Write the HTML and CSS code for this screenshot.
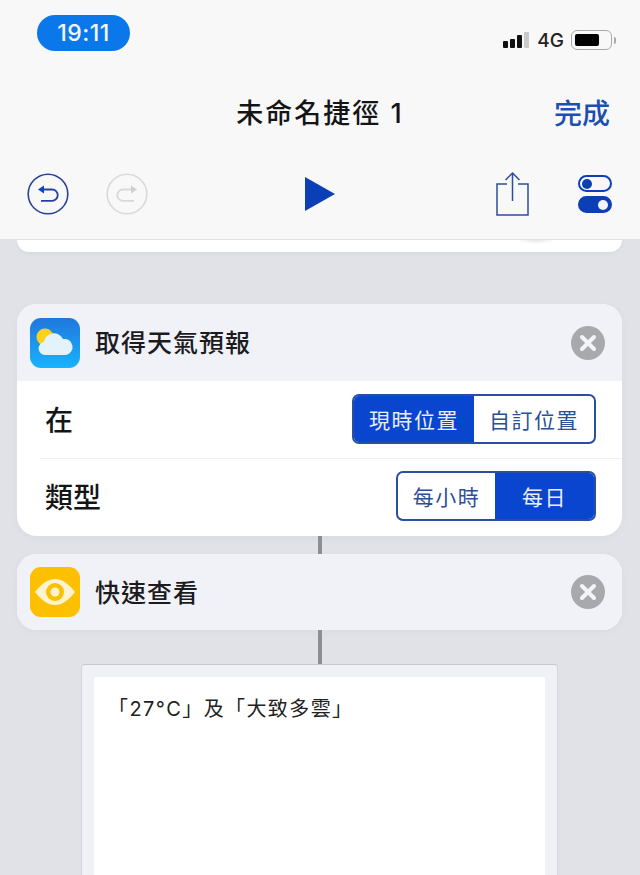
FILE: index.html
```html
<!DOCTYPE html>
<html lang="zh-Hant">
  <head>
    <meta charset="UTF-8" />
    <meta name="viewport" content="width=device-width, initial-scale=1" />
    <title>未命名捷徑 1</title>
    <link rel="stylesheet" href="styles.css">
  </head>
  <body>
    <header>
      <div class="status-bar">
        <span class="time-pill">19:11</span>
        <div class="status-right">
          <div class="signal">
            <i class="bar-1"></i>
            <i class="bar-2"></i>
            <i class="bar-3"></i>
            <i class="bar-4"></i>
          </div>
          <span class="network">4G</span>
          <div class="battery"><div class="battery-level"></div></div>
          <div class="battery-tip"></div>
        </div>
      </div>

      <div class="nav-row">
        <h1 class="title">未命名捷徑 1</h1>
        <a href="#" class="done">完成</a>
      </div>

      <div class="toolbar">
        <div class="toolbar-left">
          <svg class="round-icon" viewBox="0 0 42 42" fill="none" stroke="#27419c" stroke-width="1.6">
            <circle cx="21" cy="21" r="19.8" />
            <path d="M14 16.5H25a5.7 5.7 0 0 1 0 11.4H14" stroke-width="1.8" />
            <path d="M11 16.5l6-4v8z" fill="#0a45c4" stroke="none" />
          </svg>
          <svg class="round-icon" viewBox="0 0 42 42" fill="none" stroke="#d9d9db" stroke-width="1.6">
            <circle cx="21" cy="21" r="19.8" />
            <path d="M28 16.5H17a5.7 5.7 0 0 0 0 11.4H28" stroke-width="1.8" />
            <path d="M31 16.5l-6-4v8z" fill="#cfcfd2" stroke="none" />
          </svg>
        </div>
        <svg class="play" viewBox="0 0 30 34"><path d="M0 0L30 17L0 34z" fill="#0a3fb5" /></svg>
        <div class="toolbar-right">
          <svg class="share" viewBox="0 0 34 46" fill="none" stroke="#2b4d9d" stroke-width="1.5">
            <path d="M11 13H1v31h31V13H22" />
            <path d="M16.5 30V2M9.5 9l7-7 7 7" />
          </svg>
          <div class="toggles">
            <div class="toggle toggle-off"><span></span></div>
            <div class="toggle toggle-on"><span></span></div>
          </div>
        </div>
      </div>
    </header>

    <main>
      <div class="prev-card"></div>

      <section class="card">
        <div class="card-head">
          <svg class="app-icon" viewBox="0 0 50 50">
            <defs>
              <linearGradient id="sky" x1="0" y1="0" x2="0" y2="1">
                <stop offset="0" stop-color="#2077dd" />
                <stop offset="1" stop-color="#19b3fc" />
              </linearGradient>
            </defs>
            <rect width="50" height="50" rx="11" fill="url(#sky)" />
            <circle cx="15" cy="19" r="8.5" fill="#fcd021" />
            <path d="M15 37a6.500 6.500 0 0 1-1-12.900a10 10 0 0 1 19-3a8 8 0 0 1 3 15.900z" fill="#e4f3fb" />
          </svg>
          <span class="card-title">取得天氣預報</span>
          <span class="close-btn">
            <svg viewBox="0 0 34 34"><path d="M11 11L23 23M23 11L11 23" stroke="#f4f4f6" stroke-width="4" stroke-linecap="round" /></svg>
          </span>
        </div>
        <div class="param-row">
          <span class="param-label">在</span>
          <div class="segmented">
            <span class="seg seg-active seg-wide">現時位置</span>
            <span class="seg seg-wide">自訂位置</span>
          </div>
        </div>
        <div class="param-row">
          <span class="param-label">類型</span>
          <div class="segmented">
            <span class="seg seg-hourly">每小時</span>
            <span class="seg seg-active seg-daily">每日</span>
          </div>
        </div>
      </section>

      <div class="connector connector-short"></div>

      <section class="card">
        <div class="card-head card-head-only">
          <svg class="app-icon" viewBox="0 0 50 50">
            <rect width="50" height="50" rx="11" fill="#fcc000" />
            <path d="M5 25C13 15 19 12 25 12s12 3 20 13c-8 10-14 13-20 13S13 35 5 25z" fill="#fdf3cf" />
            <circle cx="25" cy="25" r="9" fill="#fcc000" />
            <circle cx="25" cy="25" r="4.500" fill="#fdf3cf" />
          </svg>
          <span class="card-title">快速查看</span>
          <span class="close-btn">
            <svg viewBox="0 0 34 34"><path d="M11 11L23 23M23 11L11 23" stroke="#f4f4f6" stroke-width="4" stroke-linecap="round" /></svg>
          </span>
        </div>
      </section>

      <div class="connector connector-long"></div>

      <div class="preview">
        <div class="preview-inner">「27°C」及「大致多雲」</div>
      </div>
    </main>
  </body>
</html>
```

FILE: styles.css
```css
* {
  margin: 0;
  padding: 0;
  box-sizing: border-box;
  font-family: "Inter", "Noto Sans CJK TC", sans-serif;
}
html,
body {
  height: 875px;
  overflow: hidden;
}
body {
  background: #e1e2e8;
  color: #111;
}
a {
  color: inherit;
  text-decoration: none;
}

/* Header */
header {
  position: relative;
  z-index: 2;
  height: 240px;
  background: #f8f8f9;
  border-bottom: 1px solid #e3e3e6;
  padding-top: 15px;
}
.status-bar {
  display: flex;
  justify-content: space-between;
  align-items: center;
  height: 36px;
  padding: 0 24px 0 37px;
}
.time-pill {
  width: 93px;
  height: 36px;
  border-radius: 18px;
  background: #0a78ea;
  color: #f2f6fc;
  font-size: 23px;
  font-weight: 500;
  letter-spacing: 0.5px;
  line-height: 36px;
  text-align: center;
}
.status-right {
  display: flex;
  align-items: center;
  margin-top: 14px;
}
.signal {
  display: flex;
  align-items: flex-end;
  gap: 2px;
  height: 16px;
  margin-right: 8px;
}
.signal i {
  display: block;
  width: 5px;
  background: #111;
  border-radius: 1px;
}
.signal .bar-1 {
  height: 7px;
}
.signal .bar-2 {
  height: 9px;
}
.signal .bar-3 {
  height: 13px;
}
.signal .bar-4 {
  height: 16px;
  background: #c9c9cb;
}
.network {
  font-size: 19px;
  font-weight: 500;
  color: #222;
  margin-right: 7px;
}
.battery {
  width: 41px;
  height: 20px;
  padding: 3px;
  border: 1.5px solid #a9a9ab;
  border-radius: 6px;
}
.battery-level {
  width: 24px;
  height: 100%;
  background: #000;
  border-radius: 2px;
}
.battery-tip {
  width: 2px;
  height: 7px;
  margin-left: 2px;
  background: #a9a9ab;
  border-radius: 0 2px 2px 0;
}

.nav-row {
  position: relative;
  display: flex;
  justify-content: center;
  align-items: center;
  height: 46px;
  margin-top: 39px;
}
.title {
  margin-bottom: 4px;
  font-size: 27px;
  font-weight: 500;
  letter-spacing: 2px;
  color: #151515;
}
.done {
  position: absolute;
  right: 30px;
  top: 1px;
  font-size: 28px;
  font-weight: 500;
  line-height: 46px;
  color: #1c4fb0;
}

/* Toolbar */
.toolbar {
  position: relative;
  display: flex;
  justify-content: center;
  align-items: center;
  height: 50px;
  margin-top: 33px;
}
.toolbar-left {
  position: absolute;
  left: 27px;
  display: flex;
  gap: 37px;
}
.round-icon {
  display: block;
  width: 42px;
  height: 42px;
}
.play {
  display: block;
  width: 30px;
  height: 34px;
}
.toolbar-right {
  position: absolute;
  right: 28px;
  display: flex;
  align-items: center;
  gap: 48px;
}
.share {
  display: block;
  width: 34px;
  height: 46px;
  margin-top: -1px;
}
.toggles {
  display: flex;
  flex-direction: column;
  gap: 4px;
  margin-top: 0;
}
.toggle {
  display: flex;
  align-items: center;
  width: 34px;
  height: 17px;
  padding: 1.5px 2px;
  border-radius: 9px;
  border: 2px solid #0a3fb5;
}
.toggle span {
  width: 10px;
  height: 10px;
  border-radius: 50%;
  background: #0a3fb5;
}
.toggle-on {
  justify-content: flex-end;
  background: #0a3fb5;
}
.toggle-on span {
  background: #f2f4fa;
}

/* Cards */
main {
  display: flex;
  flex-direction: column;
  padding: 0 18px 0 17px;
}
.prev-card {
  height: 12px;
  background: radial-gradient(ellipse 20px 4px at 519px 0, #e6e6e9, transparent), #fff;
  border-radius: 0 0 14px 14px;
  box-shadow: 0 1px 4px rgba(0, 0, 0, 0.05);
  margin-bottom: 52px;
}
.card {
  border-radius: 20px;
  background: #fff;
  overflow: hidden;
  box-shadow: 0 2px 10px rgba(0, 0, 0, 0.03);
}
.card-head {
  display: flex;
  align-items: center;
  height: 77px;
  padding: 0 17px 0 13px;
  background: #f1f2f7;
}
.card-head-only {
  height: 76px;
}
.app-icon {
  display: block;
  flex-shrink: 0;
  width: 50px;
  height: 50px;
}
.card-title {
  flex-grow: 1;
  margin-left: 15px;
  margin-bottom: 3px;
  font-size: 25px;
  font-weight: 500;
  letter-spacing: 1px;
  color: #1c1c1e;
}
.card-head-only .card-title {
  margin-bottom: 2px;
}
.close-btn {
  display: block;
  width: 34px;
  height: 34px;
  border-radius: 50%;
  background: #a8a9ad;
}
.close-btn svg {
  display: block;
}
.param-row {
  display: flex;
  justify-content: space-between;
  align-items: center;
  height: 78px;
  margin-left: 23px;
  padding: 0 26px 3px 5px;
  border-top: 1px solid #f0f0f2;
}
.param-row:nth-child(2) {
  height: 77px;
  margin-left: 0;
  padding: 0 26px 1px 28px;
  border-top: none;
}
.param-label {
  margin-top: -1px;
  font-size: 28px;
  font-weight: 500;
  color: #151515;
}
.segmented {
  display: flex;
  height: 50px;
  border: 2px solid #2a4f9f;
  border-radius: 7px;
  overflow: hidden;
}
.seg {
  display: flex;
  justify-content: center;
  align-items: center;
  font-size: 21px;
  letter-spacing: 1.5px;
  color: #2c5096;
}
.seg-active {
  background: #0a45cf;
  color: #e8eefb;
}
.seg-wide {
  width: 120px;
}
.seg-hourly {
  width: 97px;
}
.seg-daily {
  width: 99px;
}

.connector {
  align-self: center;
  width: 4px;
  background: #8e8e93;
}
.connector-short {
  height: 18px;
}
.connector-long {
  height: 34px;
}

/* Preview box */
.preview {
  align-self: center;
  width: 477px;
  height: 211px;
  padding: 12px 12px 0 12px;
  background: #f0f1f6;
  border-top: 1px solid #c6c8cf;
  border-left: 1px solid #d4d6dc;
  border-right: 1px solid #d4d6dc;
  border-radius: 4px 4px 0 0;
}
.preview-inner {
  height: 100%;
  padding: 16px 14px;
  background: #fff;
  border-radius: 3px 3px 0 0;
  font-size: 20px;
  letter-spacing: 1.4px;
  color: #222;
}
```
